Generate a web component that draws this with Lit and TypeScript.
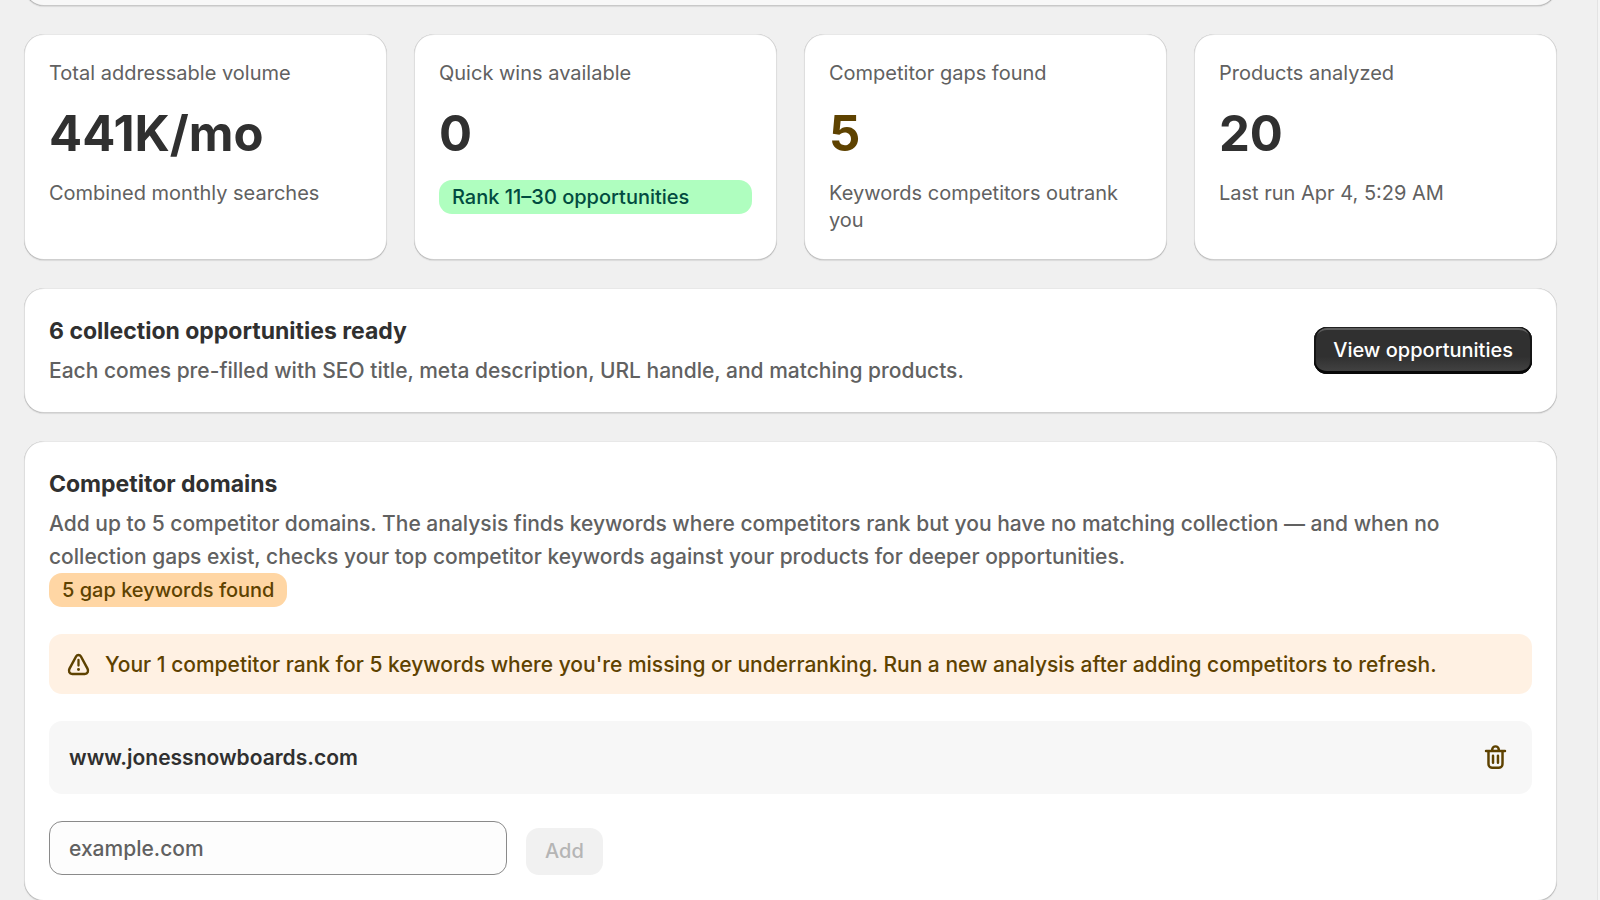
import { LitElement, html, css, svg } from "lit";
import { customElement, state } from "lit/decorators.js";
import { classMap } from "lit/directives/class-map.js";

interface Stat {
  label: string;
  value: string;
  note: string;
  caution?: boolean;
  badge?: boolean;
}

const stats: Stat[] = [
  { label: "Total addressable volume", value: "441K/mo", note: "Combined monthly searches" },
  { label: "Quick wins available", value: "0", note: "Rank 11–30 opportunities", badge: true },
  { label: "Competitor gaps found", value: "5", note: "Keywords competitors outrank you", caution: true },
  { label: "Products analyzed", value: "20", note: "Last run Apr 4, 5:29 AM" },
];

const alertIcon = html`<svg class="icon" viewBox="0 0 20 20" aria-hidden="true">
  ${svg`
    <path d="M8.6 5c.6-1.05 2.2-1.05 2.8 0l4.05 7.5c.8 1.6.1 3.2-1.65 3.2H6.2c-1.75 0-2.45-1.6-1.65-3.2Z" fill="none" stroke="currentColor" stroke-width="1.5" stroke-linejoin="round"/>
    <path d="M10 7.2v3.4" fill="none" stroke="currentColor" stroke-width="1.4" stroke-linecap="round"/>
    <circle cx="10" cy="13" r=".9" fill="currentColor"/>
  `}
</svg>`;

const deleteIcon = html`<svg class="icon" viewBox="0 0 20 20" aria-hidden="true" fill="currentColor">
  ${svg`
    <path d="M11.5 8.25a.75.75 0 0 1 .75.75v4.25a.75.75 0 0 1-1.5 0v-4.25a.75.75 0 0 1 .75-.75Z"/>
    <path d="M9.25 9a.75.75 0 0 0-1.5 0v4.25a.75.75 0 0 0 1.5 0v-4.25Z"/>
    <path fill-rule="evenodd" d="M7.25 5.25a2.75 2.75 0 0 1 5.5 0h3a.75.75 0 0 1 0 1.5h-.75v5.45c0 1.68 0 2.52-.327 3.162a3 3 0 0 1-1.311 1.311c-.642.327-1.482.327-3.162.327h-.4c-1.68 0-2.52 0-3.162-.327a3 3 0 0 1-1.311-1.311c-.327-.642-.327-1.482-.327-3.162v-5.45h-.75a.75.75 0 0 1 0-1.5h3Zm1.5 0a1.25 1.25 0 1 1 2.5 0h-2.5Zm-2.25 1.5h7v5.45c0 .865-.001 1.423-.036 1.848-.033.408-.09.559-.128.633a1.5 1.5 0 0 1-.655.655c-.074.038-.225.095-.633.128-.425.035-.983.036-1.848.036h-.4c-.865 0-1.423-.001-1.848-.036-.408-.033-.559-.09-.633-.128a1.5 1.5 0 0 1-.656-.655c-.037-.074-.094-.225-.127-.633-.035-.425-.036-.983-.036-1.848v-5.45Z"/>
  `}
</svg>`;

@customElement("app-root")
export class AppRoot extends LitElement {
  static styles = css`
    :host {
      display: block;
      box-sizing: border-box;
      height: 100vh;
      overflow: hidden;
      border-right: 2px solid #f4f4f4;
      background: #f0f0f0;
      color: #303030;
      font-family: Inter, "Liberation Sans", sans-serif;
      font-size: 21px;
      line-height: 33px;
      font-weight: 500;
    }
    * {
      box-sizing: border-box;
    }
    h2,
    p {
      margin: 0;
    }
    button,
    input {
      font: inherit;
    }
    .page {
      display: flex;
      flex-direction: column;
      gap: 28px;
      min-height: 100%;
      padding: 0 40px 28px 24px;
      border-right: 1px solid #e3e3e3;
    }
    .card {
      padding: 26px 25px;
      border-radius: 20px;
      background: #fff;
      box-shadow:
        inset 1px 0 0 rgba(0, 0, 0, 0.13),
        inset -1px 0 0 rgba(0, 0, 0, 0.13),
        inset 0 -1px 0 rgba(0, 0, 0, 0.19),
        inset 0 1px 0 rgba(0, 0, 0, 0.09),
        0 1px 1px rgba(26, 26, 26, 0.1);
    }
    .card.previous {
      height: 60px;
      margin-top: -54px;
      background: #f8f8f8;
    }
    .stats {
      display: grid;
      grid-template-columns: repeat(4, minmax(0, 1fr));
      gap: 27px;
    }
    .stat {
      display: flex;
      flex-direction: column;
      gap: 13px;
    }
    .small {
      color: #616161;
      font-size: 20px;
      line-height: 27px;
      font-weight: 400;
    }
    .value {
      font-size: 49px;
      line-height: 67px;
      font-weight: 700;
    }
    .value.caution {
      color: #5e4200;
    }
    .badge {
      padding: 0 13px;
      border-radius: 13px;
      font-size: 20px;
      line-height: 34px;
    }
    .badge.success {
      background: #affebf;
      color: #014b40;
    }
    .badge.warning {
      align-self: flex-start;
      background: #ffd6a4;
      color: #5e4200;
    }
    .summary {
      display: flex;
      align-items: center;
      justify-content: space-between;
      gap: 26px;
    }
    .text {
      display: flex;
      flex-direction: column;
      gap: 6px;
    }
    .heading {
      font-size: 23px;
      line-height: 34px;
      font-weight: 700;
    }
    .muted {
      color: #616161;
    }
    .primary {
      flex: none;
      height: 47px;
      padding: 0 19px 1px;
      border: 0;
      border-radius: 13px;
      background: linear-gradient(#303030 63%, #454545 100%);
      color: #fff;
      font-size: 20px;
      line-height: 27px;
      box-shadow:
        inset 0 -3px 0 #080808,
        inset 2px 0 0 #161616,
        inset -2px 0 0 #161616,
        inset 0 1px 0 #222,
        inset 0 3px 0 #5d5d5d;
    }
    .domains {
      display: flex;
      flex-direction: column;
      gap: 27px;
    }
    .intro {
      display: flex;
      flex-direction: column;
    }
    .banner {
      display: flex;
      align-items: center;
      gap: 10px;
      min-height: 60px;
      padding: 13px;
      border-radius: 13px;
      background: #fff1e3;
      color: #5e4200;
    }
    .icon {
      display: block;
      flex: none;
      width: 33px;
      height: 33px;
    }
    .domain {
      display: flex;
      align-items: center;
      justify-content: space-between;
      padding: 20px;
      border-radius: 13px;
      background: #f7f7f7;
      font-weight: 600;
    }
    .delete {
      padding: 0;
      border: 0;
      background: none;
      color: #5e4200;
    }
    .form {
      display: flex;
      align-items: flex-end;
      gap: 19px;
    }
    .field {
      width: 458px;
      height: 54px;
      padding: 0 19px;
      border: 1px solid #8a8a8a;
      border-radius: 13px;
      background: #fdfdfd;
      color: #303030;
    }
    .field::placeholder {
      color: #616161;
      opacity: 1;
    }
    .add {
      height: 47px;
      padding: 0 19px;
      border: 0;
      border-radius: 13px;
      background: #f1f1f1;
      color: #b5b5b5;
      font-size: 20px;
      line-height: 27px;
    }
    .add:enabled {
      background: #e3e3e3;
      color: #303030;
    }
  `;

  @state() private domains = ["www.jonessnowboards.com"];
  @state() private draft = "";

  private onInput(event: Event) {
    this.draft = (event.target as HTMLInputElement).value;
  }

  private onSubmit(event: Event) {
    event.preventDefault();
    const domain = this.draft.trim();
    if (!domain || this.domains.length >= 5) return;
    this.domains = [...this.domains, domain];
    this.draft = "";
  }

  private remove(domain: string) {
    this.domains = this.domains.filter((item) => item !== domain);
  }

  private renderStat(stat: Stat) {
    return html`<article class="card stat">
      <p class="small">${stat.label}</p>
      <p class=${classMap({ value: true, caution: !!stat.caution })}>${stat.value}</p>
      <p class=${stat.badge ? "badge success" : "small"}>${stat.note}</p>
    </article>`;
  }

  render() {
    return html`<main class="page">
      <div class="card previous"></div>
      <section class="stats">${stats.map((stat) => this.renderStat(stat))}</section>
      <section class="card summary">
        <div class="text">
          <h2 class="heading">6 collection opportunities ready</h2>
          <p class="muted">Each comes pre-filled with SEO title, meta description, URL handle, and matching products.</p>
        </div>
        <button class="primary" type="button">View opportunities</button>
      </section>
      <section class="card domains">
        <div class="intro">
          <div class="text">
            <h2 class="heading">Competitor domains</h2>
            <p class="muted">
              Add up to 5 competitor domains. The analysis finds keywords where competitors rank but you have no
              matching collection — and when no collection gaps exist, checks your top competitor keywords against your
              products for deeper opportunities.
            </p>
          </div>
          <span class="badge warning">5 gap keywords found</span>
        </div>
        <div class="banner" role="status">
          ${alertIcon}
          <p>
            Your 1 competitor rank for 5 keywords where you're missing or underranking. Run a new analysis after adding
            competitors to refresh.
          </p>
        </div>
        ${this.domains.map(
          (domain) => html`<div class="domain">
            <span>${domain}</span>
            <button class="delete" type="button" aria-label="Remove ${domain}" @click=${() => this.remove(domain)}>
              ${deleteIcon}
            </button>
          </div>`,
        )}
        <form class="form" @submit=${this.onSubmit}>
          <input
            class="field"
            type="text"
            aria-label="Competitor domain"
            placeholder="example.com"
            .value=${this.draft}
            @input=${this.onInput}
          />
          <button class="add" type="submit" ?disabled=${!this.draft.trim()}>Add</button>
        </form>
      </section>
    </main>`;
  }
}
